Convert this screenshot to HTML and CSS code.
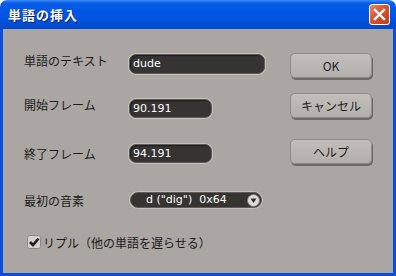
FILE: index.html
```html
<!DOCTYPE html>
<html lang="ja">
<head>
<meta charset="UTF-8">
<title>単語の挿入</title>
<link rel="stylesheet" href="styles.css">
</head>
<body>
<div class="dialog">
    <div class="titlebar">
        <span class="title">単語の挿入</span>
        <div class="close">
            <svg width="13" height="13" viewBox="0 0 13 13"><path d="M2 2 L11 11 M11 2 L2 11" stroke="#fff" stroke-width="2.4" stroke-linecap="square"/></svg>
        </div>
    </div>
    <div class="client">
        <div class="form">
            <div class="row row1">
                <label class="label up4">単語のテキスト</label>
                <div class="field wide">dude</div>
            </div>
            <div class="row row2">
                <label class="label up4">開始フレーム</label>
                <div class="field">90.191</div>
            </div>
            <div class="row row3">
                <label class="label">終了フレーム</label>
                <div class="field">94.191</div>
            </div>
            <div class="row row4">
                <label class="label">最初の音素</label>
                <div class="select">
                    <span>d ("dig")&nbsp; 0x64</span>
                    <span class="arrow">
                        <svg width="13" height="13" viewBox="0 0 13 13"><circle cx="6.5" cy="6.5" r="6" fill="#dedcd9" stroke="#7d7a76"/><path d="M3.5 4.5 L9.5 4.5 L6.5 9 Z" fill="#2e2d2b"/></svg>
                    </span>
                </div>
            </div>
            <div class="check-row">
                <span class="checkbox">
                    <svg width="14" height="14" viewBox="0 0 14 14"><rect x="0.5" y="0.5" width="13" height="13" rx="2" fill="#d4d2cf" stroke="#8c8985"/><path d="M3 7 L6 10 L11.5 3.5" fill="none" stroke="#1c1c1c" stroke-width="2.6"/></svg>
                </span>
                <span>リプル（他の単語を遅らせる）</span>
            </div>
        </div>
        <div class="buttons">
            <div class="btn">OK</div>
            <div class="btn">キャンセル</div>
            <div class="btn help">ヘルプ</div>
        </div>
    </div>
</div>
</body>
</html>
```

FILE: styles.css
```css
body {
    margin: 0;
    padding: 0;
    background: #ffffff;
    font-family: "Noto Sans CJK JP", "DejaVu Sans", sans-serif;
}
.dialog {
    width: 396px;
    height: 276px;
    display: flex;
    flex-direction: column;
}
.titlebar {
    height: 29px;
    box-sizing: border-box;
    border-radius: 7px 7px 0 0;
    background: linear-gradient(#3e8cf5 0, #0a5ee8 3px, #0058e6 10px, #0052de 20px, #0049cc 29px);
    display: flex;
    align-items: center;
    justify-content: space-between;
    padding: 0 6px 0 8px;
}
.title {
    color: #fff;
    font-weight: bold;
    font-size: 13px;
    text-shadow: 1px 1px 0 #0a1e6e;
    letter-spacing: 1px;
}
.close {
    width: 21px;
    height: 21px;
    box-sizing: border-box;
    border: 1px solid #fff;
    border-radius: 3px;
    background: linear-gradient(135deg, #ec8a6a, #d9532b 45%, #c23c18);
    display: flex;
    align-items: center;
    justify-content: center;
}
.client {
    flex: 1;
    background: #aaa6a2;
    border: 3px solid #0a4fdc;
    border-top: none;
    display: flex;
    color: #1b1b1b;
    font-size: 12px;
}
.form {
    padding: 25px 0 0 21px;
    width: 266px;
    display: flex;
    flex-direction: column;
}
.row {
    display: flex;
    align-items: center;
    height: 20px;
}
.row2 { margin-top: 24px; }
.row3 { margin-top: 25px; }
.row4 { margin-top: 27px; }
.label {
    width: 105px;
    flex-shrink: 0;
}
.label.up4 {
    margin-bottom: 8px;
}
.field {
    width: 83px;
    height: 19px;
    box-sizing: border-box;
    background: #353432;
    border: 1px solid #5e5b58;
    border-radius: 7px;
    box-shadow: 0 0 0 1px #c4c1bd, inset 1px 1px 1px #1d1c1b;
    color: #fff;
    font-family: "DejaVu Sans", sans-serif;
    font-size: 11px;
    line-height: 17px;
    padding-left: 3px;
}
.field.wide {
    width: 136px;
    height: 20px;
    line-height: 18px;
}
.select {
    margin-left: 1px;
    width: 132px;
    height: 16px;
    box-sizing: border-box;
    background: #353432;
    border: 1px solid #5e5b58;
    border-radius: 8px;
    box-shadow: 0 0 0 1px #c4c1bd;
    color: #fff;
    font-family: "DejaVu Sans", sans-serif;
    font-size: 11px;
    line-height: 14px;
    padding: 0 1px 0 15px;
    display: flex;
    justify-content: space-between;
    align-items: center;
}
.arrow {
    display: flex;
}
.check-row {
    margin-top: 22px;
    margin-left: 3px;
    display: flex;
    align-items: center;
    height: 20px;
    gap: 2px;
}
.checkbox {
    display: flex;
}
.buttons {
    padding-top: 24px;
    display: flex;
    flex-direction: column;
}
.btn {
    width: 82px;
    height: 25px;
    box-sizing: border-box;
    border: 1px solid #8f8c88;
    border-radius: 5px;
    background: linear-gradient(#c2bfbb, #b3b0ac);
    box-shadow: 1px 2px 0 #6d6a66;
    display: flex;
    align-items: center;
    justify-content: center;
    color: #1e1e1e;
    margin-bottom: 15px;
}
.btn.help {
    margin-top: 6px;
}
```
